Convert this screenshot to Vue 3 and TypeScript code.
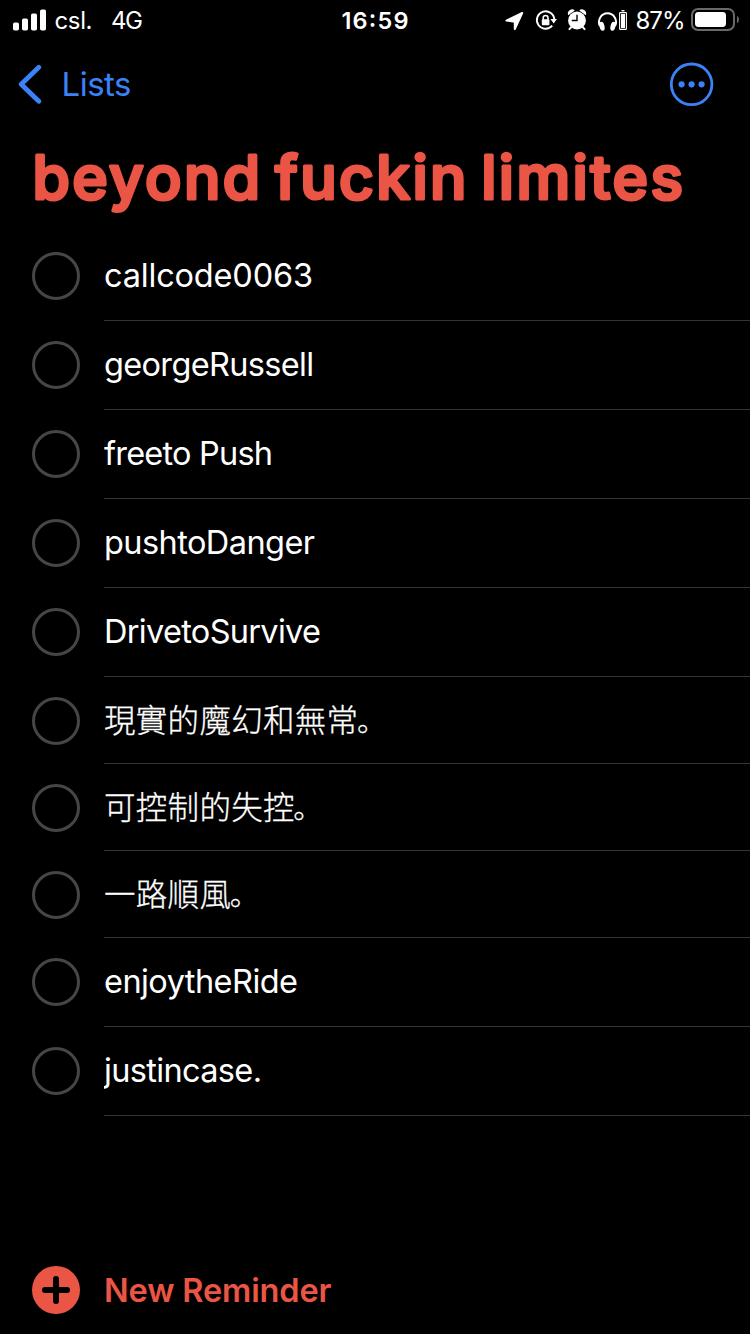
<script setup lang="ts">
interface Reminder {
  title: string
  width?: number
  cjk?: boolean
}

const reminders: Reminder[] = [
  { title: 'callcode0063', width: 209 },
  { title: 'georgeRussell', width: 210 },
  { title: 'freeto Push', width: 169 },
  { title: 'pushtoDanger', width: 211 },
  { title: 'DrivetoSurvive', width: 217 },
  { title: '現實的魔幻和無常。', cjk: true },
  { title: '可控制的失控。', cjk: true },
  { title: '一路順風。', cjk: true },
  { title: 'enjoytheRide', width: 194 },
  { title: 'justincase.', width: 158 },
]

// The full stop is split off so it can use the corner-aligned glyph.
const body = (r: Reminder) => (r.cjk ? r.title.slice(0, -1) : r.title)
const stop = (r: Reminder) => (r.cjk ? r.title.slice(-1) : '')
</script>

<template>
  <main class="screen">
    <header class="status">
      <div class="carrier">
        <svg class="signal" width="34" height="22" viewBox="0 0 34 22">
          <rect x="0" y="13.5" width="6" height="8" rx="1.7" />
          <rect x="9" y="9.5" width="6" height="12" rx="1.7" />
          <rect x="18" y="4.5" width="6" height="17" rx="1.7" />
          <rect x="27" y="0.5" width="6" height="21" rx="1.7" />
        </svg>
        <svg class="label" width="100" height="40">
          <text x="-0.5" y="29" textLength="38">csl.</text>
          <text x="56" y="29" textLength="32">4G</text>
        </svg>
      </div>
      <svg class="clock" width="70" height="40">
        <text x="0.5" y="29" textLength="67">16:59</text>
      </svg>
      <svg class="indicators" width="250" height="40" viewBox="500 0 250 40">
        <path d="M522.2 13L514.8 29V21.8L506.4 20.6Z" fill="#fff" stroke="#fff" stroke-width="2" stroke-linejoin="round" />
        <g fill="none" stroke="#fff" stroke-width="1.9">
          <path d="M552.2 25.7A8.7 8.7 0 1 1 554.3 20" />
          <path d="M543.2 20V17.9a2.4 2.4 0 0 1 4.8 0V20" stroke-width="1.5" />
        </g>
        <rect x="541.8" y="19.3" width="7.6" height="6" rx="1" fill="#fff" />
        <path d="M550.4 19.1H557L553.7 23.6Z" fill="#fff" />
        <circle cx="577" cy="20.5" r="8.9" fill="#fff" />
        <path d="M568.2 15.2A4.2 4.2 0 0 1 574.8 10.4ZM579.2 10.4A4.2 4.2 0 0 1 585.8 15.2Z" fill="#fff" />
        <path d="M571.4 27l-2 2.1M582.6 27l2 2.1" stroke="#fff" stroke-width="2" stroke-linecap="round" />
        <path d="M577 15.2V20.5H572.3" fill="none" stroke="#000" stroke-width="1.4" stroke-linecap="round" />
        <path d="M599.9 26A8.5 8.8 0 1 1 615.1 26" fill="none" stroke="#fff" stroke-width="2" />
        <ellipse cx="602" cy="26.2" rx="2.5" ry="4.6" transform="rotate(-13 602 26.2)" fill="#fff" />
        <ellipse cx="613" cy="26.2" rx="2.5" ry="4.6" transform="rotate(13 613 26.2)" fill="#fff" />
        <rect x="619.6" y="12.6" width="6.8" height="16.8" rx=".7" fill="none" stroke="#fff" stroke-width="1.1" />
        <rect x="621" y="14" width="4" height="14" fill="#fff" />
        <rect x="621.5" y="10" width="3" height="1.4" fill="#fff" />
        <text x="635.5" y="29" textLength="50">87%</text>
        <rect x="692" y="9" width="42" height="21" rx="6" fill="none" stroke="#69696b" stroke-width="2" />
        <rect x="695" y="12" width="31" height="15" rx="3.4" fill="#fff" />
        <path d="M737 15.7Q739 17 739 19.5T737 23.3Z" fill="#69696b" />
      </svg>
    </header>

    <nav class="nav">
      <button class="back" type="button">
        <svg width="26" height="42" viewBox="0 0 26 42">
          <path d="M20.8 4.3L3.2 21.3L20.8 38.3" />
        </svg>
        <svg class="back-label" width="76" height="44">
          <text x="-0.5" y="34" textLength="70">Lists</text>
        </svg>
      </button>
      <button class="more" type="button" aria-label="More">
        <svg width="44" height="44" viewBox="0 0 44 44">
          <circle class="ring" cx="21.6" cy="22.3" r="20.3" />
          <circle cx="11.6" cy="22.3" r="3.1" />
          <circle cx="21.6" cy="22.3" r="3.1" />
          <circle cx="31.6" cy="22.3" r="3.1" />
        </svg>
      </button>
    </nav>

    <h1 class="title">
      <svg width="718" height="100">
        <text x="0.5" y="71" textLength="650.5">beyond fuckin limites</text>
      </svg>
    </h1>

    <ul class="list">
      <li v-for="item in reminders" :key="item.title" class="row" :class="{ cjk: item.cjk }">
        <span class="check"></span>
        <svg class="name" height="86">
          <text x="0" y="55" :textLength="item.width">{{ body(item) }}<tspan v-if="item.cjk" class="stop" dx="-1.5">{{ stop(item) }}</tspan></text>
        </svg>
      </li>
    </ul>

    <footer class="footer">
      <svg width="48" height="48" viewBox="0 0 48 48">
        <circle cx="24" cy="24" r="24" />
        <path d="M24 13V35M13 24H35" />
      </svg>
      <svg class="new-label" width="240" height="48">
        <text x="0" y="36" textLength="227.5">New Reminder</text>
      </svg>
    </footer>
  </main>
</template>

<style>
html,
body {
  margin: 0;
  background: #000;
}
</style>

<style scoped>
.screen {
  width: 750px;
  height: 1334px;
  box-sizing: border-box;
  display: flex;
  flex-direction: column;
  overflow: hidden;
  background: #000;
  color: #fff;
  font-family: Inter, "Noto Sans CJK TC", sans-serif;
  font-optical-sizing: none;
}
svg {
  display: block;
  flex: none;
}
button {
  padding: 0;
  border: 0;
  background: none;
}
.status {
  height: 40px;
  display: grid;
  grid-template-columns: 341px 159px 250px;
  font-size: 24px;
  fill: #fff;
}
.carrier {
  display: flex;
  padding-left: 13px;
  gap: 8px;
}
.signal {
  margin-top: 8.5px;
}
.clock {
  font-weight: 600;
  font-size: 23.5px;
}
.nav {
  height: 88px;
  box-sizing: border-box;
  padding: 0 36px 0 18px;
  display: flex;
  align-items: center;
  justify-content: space-between;
}
.back {
  display: flex;
  align-items: center;
  gap: 18px;
  font-family: Inter, sans-serif;
  font-size: 33px;
}
.back path {
  fill: none;
  stroke: #3b82f7;
  stroke-width: 4.8;
  stroke-linecap: round;
  stroke-linejoin: round;
}
.back-label {
  fill: #3b82f7;
}
.more {
  fill: #3b82f7;
}
.ring {
  fill: none;
  stroke: #3b82f7;
  stroke-width: 2.8;
}
.title {
  height: 104px;
  margin: 0;
  padding-left: 32px;
  font-size: 60.5px;
  font-weight: 500;
  word-spacing: -6px;
}
.title text {
  fill: #eb5545;
  stroke: #eb5545;
  stroke-width: 3.2px;
  stroke-linejoin: round;
}
.list {
  margin: 0;
  padding: 0;
  list-style: none;
}
.row {
  height: 89px;
  display: flex;
  padding-left: 32px;
  gap: 24px;
}
.row.cjk {
  height: 87px;
}
.check {
  flex: none;
  width: 48px;
  height: 48px;
  margin-top: 20px;
  box-sizing: border-box;
  border: 3px solid #464648;
  border-radius: 50%;
}
.name {
  flex: 1;
  height: 100%;
  box-sizing: border-box;
  border-bottom: 1px solid #343436;
  font-size: 32.5px;
  fill: #fff;
}
.cjk .name {
  font-family: "Noto Sans CJK TC", sans-serif;
  font-size: 31.5px;
  font-weight: 300;
  letter-spacing: 0.3px;
  stroke: #fff;
  stroke-width: 0.3px;
}
.name .stop {
  font-family: "Noto Sans CJK JP", sans-serif;
  font-size: 29px;
}
.footer {
  margin-top: auto;
  padding: 0 32px 20px;
  display: flex;
  gap: 24px;
  fill: #eb5545;
  font-size: 32.5px;
  font-weight: 600;
}
.footer path {
  stroke: #000;
  stroke-width: 6;
  stroke-linecap: round;
}
</style>
